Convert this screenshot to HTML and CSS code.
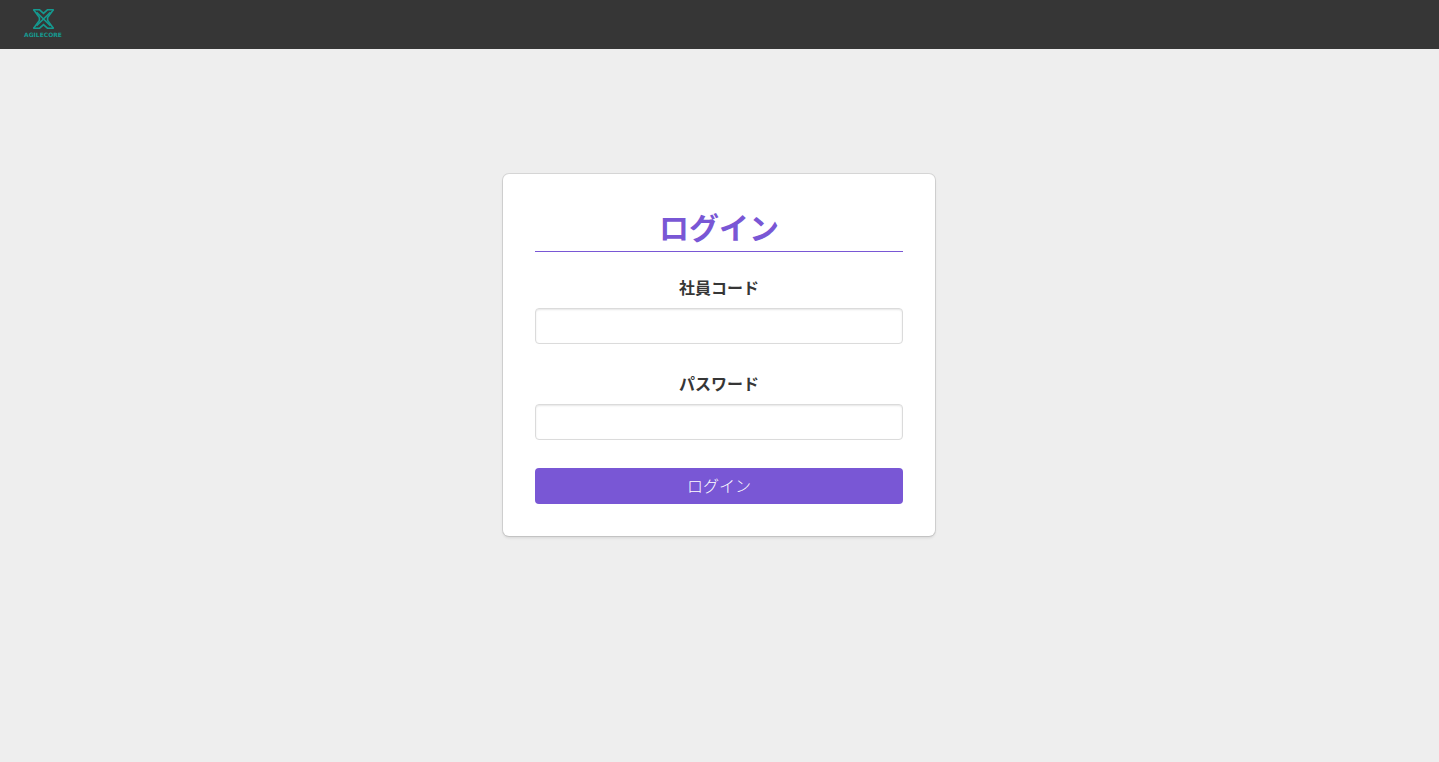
FILE: index.html
```html
<!DOCTYPE html>
<html lang="ja">
<head>
<meta charset="utf-8">
<meta name="viewport" content="width=device-width, initial-scale=1">
<title>ログイン</title>
<link rel="stylesheet" href="styles.css">
</head>
<body>
<header class="navbar">
  <a class="brand" href="#" aria-label="AGILECORE">
    <svg class="brand-mark" viewBox="0 0 21 20" aria-hidden="true">
      <path d="M.2 .8H6.6L10.5 4.4 14.4 .8H20.8M.2 19.2H6.6L10.5 15.6 14.4 19.2H20.8"/>
      <path d="M.6 .6L6.4 8.6V11.4L.6 19.4M20.4 .6L14.6 8.6V11.4L20.4 19.4"/>
      <path d="M3.6 3.2L17.4 16.8M17.4 3.2L3.6 16.8"/>
    </svg>
    <span class="brand-name">AGILECORE</span>
  </a>
</header>
<main class="page">
  <form class="box">
    <h1 class="title">ログイン</h1>
    <div class="field">
      <label class="label" for="code">社員コード</label>
      <input class="input" id="code" type="text">
    </div>
    <div class="field">
      <label class="label" for="password">パスワード</label>
      <input class="input" id="password" type="password">
    </div>
    <button class="button" type="button">ログイン</button>
  </form>
</main>
</body>
</html>
```

FILE: styles.css
```css
* {
  box-sizing: border-box;
}

body {
  margin: 0;
  min-height: 100vh;
  display: flex;
  flex-direction: column;
  background: #eee;
  color: #363636;
  font-family: "Noto Sans CJK JP", sans-serif;
  font-size: 16px;
  line-height: 24px;
}

.navbar {
  height: 49px;
  padding: 9px 20px 0;
  background: #363636;
}

.brand {
  display: inline-flex;
  flex-direction: column;
  align-items: center;
  width: 46px;
  gap: 3px;
  color: #159a90;
  text-decoration: none;
}

.brand-mark {
  width: 21px;
  height: 20px;
  fill: none;
  stroke: currentColor;
  stroke-width: 1.6;
}

.brand-name {
  font-family: "DejaVu Sans", sans-serif;
  font-size: 6px;
  font-weight: 700;
  line-height: 6px;
}

.page {
  flex: 1;
  padding: 125px 17px 32px 16px;
}

.box {
  max-width: 432px;
  margin: 0 auto;
  padding: 32px;
  border-radius: 6px;
  background: #fff;
  box-shadow: 0 2px 3px rgba(10, 10, 10, 0.1), 0 0 0 1px rgba(10, 10, 10, 0.1);
}

.title {
  margin: 0 0 24px;
  padding-bottom: 5px;
  border-bottom: 1px solid #7957d5;
  color: #7957d5;
  font-size: 30px;
  font-weight: 700;
  line-height: 40px;
  text-align: center;
}

.field {
  margin-bottom: 28px;
}

.label {
  display: block;
  margin-bottom: 10px;
  font-weight: 700;
  line-height: 22px;
  text-align: center;
}

.input,
.button {
  display: block;
  width: 100%;
  height: 36px;
  border-radius: 4px;
  font: inherit;
}

.input {
  padding: 4px 10px;
  border: 1px solid #dbdbdb;
  background: #fff;
  color: inherit;
  box-shadow: inset 0 1px 2px rgba(10, 10, 10, 0.1);
}

.button {
  padding: 0 16px 2px;
  border: 0;
  background: #7957d5;
  color: #fff;
  font-weight: 300;
  cursor: pointer;
}
```
